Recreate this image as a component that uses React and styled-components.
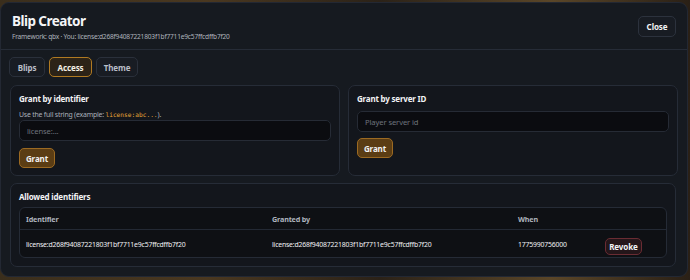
import React from "react";
import styled, { createGlobalStyle } from "styled-components";

const Global = createGlobalStyle`
  html, body { margin: 0; padding: 0; }
  body {
    width: 690px; height: 280px; overflow: hidden;
    background: linear-gradient(90deg, #3a2e1c 0%, #4a3820 30%, #2b2218 55%, #5a4628 80%, #2a2016 100%);
    font-family: "Noto Sans", "Open Sans", sans-serif;
  }
`;

const Stage = styled.div`
  padding-top: 2px;
`;

const Modal = styled.div`
  width: 688px;
  height: 275px;
  box-sizing: border-box;
  background: #161a20;
  border: 1px solid #232833;
  border-radius: 9px;
  overflow: hidden;
  display: flex;
  flex-direction: column;
  color: #e8eaee;
`;

const Header = styled.div`
  height: 47px;
  box-sizing: border-box;
  border-bottom: 1px solid #262c37;
  display: flex;
  align-items: center;
  justify-content: space-between;
  padding: 0 11px 0 11px;
`;

const TitleBlock = styled.div`
  display: flex;
  flex-direction: column;
  gap: 3px;
  margin-top: 1px;
`;

const Title = styled.div`
  font-size: 13.5px;
  font-weight: 700;
  line-height: 16px;
  letter-spacing: -0.55px;
  color: #f4f5f7;
`;

const Sub = styled.div`
  font-size: 6.6px;
  line-height: 9px;
  letter-spacing: -0.2px;
  color: #aeb3bc;
`;

const Btn = styled.button`
  font-family: inherit;
  font-weight: 700;
  font-size: 8px;
  letter-spacing: -0.1px;
  color: #f2f3f5;
  border-radius: 5px;
  box-sizing: border-box;
  cursor: pointer;
  padding: 0;
  background: ${p => p.$bg};
  border: 1px solid ${p => p.$bd};
  width: ${p => p.$w}px;
  height: ${p => p.$h}px;
`;

const Body = styled.div`
  padding: 7px 11px 0 9px;
  display: flex;
  flex-direction: column;
  gap: 7px;
`;

const Tabs = styled.div`
  display: flex;
  gap: 4px;
  margin-left: -1px;
`;

const Tab = styled.button`
  font-family: inherit;
  font-weight: 700;
  font-size: 8px;
  letter-spacing: -0.1px;
  height: 20px;
  width: ${p => p.$w}px;
  box-sizing: border-box;
  border-radius: 5px;
  padding: 0;
  color: ${p => (p.$active ? "#f5f0e6" : "#b9bec7")};
  background: ${p => (p.$active ? "#2c2317" : "#181c23")};
  border: 1px solid ${p => (p.$active ? "#b07a22" : "#2a303b")};
`;

const Row = styled.div`
  display: grid;
  grid-template-columns: 330px 330px;
  gap: 8px;
  margin-top: 1px;
`;

const Card = styled.div`
  background: #13161c;
  border: 1px solid #262c37;
  border-radius: 7px;
  box-sizing: border-box;
  height: ${p => p.$h}px;
  padding: 7px 8px 0 8px;
  display: flex;
  flex-direction: column;
`;

const CardTitle = styled.div`
  font-size: 8px;
  font-weight: 700;
  line-height: 12px;
  letter-spacing: -0.2px;
  color: #f2f3f5;
`;

const Help = styled.div`
  font-size: 6.9px;
  line-height: 10px;
  letter-spacing: -0.2px;
  color: #aab0b9;
  margin-top: 5px;
`;

const Code = styled.code`
  font-family: "DejaVu Sans Mono", "Liberation Mono", monospace;
  font-size: 6.2px;
  letter-spacing: 0;
  color: #e3a436;
`;

const Input = styled.input`
  font-family: inherit;
  font-size: 7.6px;
  letter-spacing: -0.1px;
  box-sizing: border-box;
  width: 100%;
  height: 21px;
  background: #0b0c10;
  border: 1px solid #262b35;
  border-radius: 5px;
  padding: 0 7px;
  color: #e0e0e0;
  margin-top: ${p => p.$mt}px;
  outline: none;
  &::placeholder { color: #6e737c; }
`;

const Actions = styled.div`
  margin-top: ${p => p.$mt}px;
  display: flex;
`;

const Table = styled.div`
  margin-top: 4px;
  background: #0e1014;
  border: 1px solid #252b36;
  border-radius: 6px;
  height: 51px;
  box-sizing: border-box;
`;

const TRow = styled.div`
  display: grid;
  grid-template-columns: 246px 246px 87px 1fr;
  align-items: center;
  height: ${p => p.$h}px;
  padding-left: 6px;
  border-bottom: ${p => (p.$head ? "1px solid #232934" : "none")};
  box-sizing: border-box;
`;

const Th = styled.div`
  font-size: 7.2px;
  font-weight: 700;
  letter-spacing: -0.15px;
  color: #aeb4be;
`;

const Td = styled.div`
  font-size: 6.9px;
  letter-spacing: -0.2px;
  color: #eef0f3;
  white-space: nowrap;
`;

export default function App() {
  const id = "license:d268f94087221803f1bf7711e9c57ffcdffb7f20";
  return (
    <>
      <Global />
      <Stage>
        <Modal>
          <Header>
            <TitleBlock>
              <Title>Blip Creator</Title>
              <Sub>Framework: qbx · You: {id}</Sub>
            </TitleBlock>
            <Btn $bg="#181c23" $bd="#2c323d" $w={38} $h={21}>Close</Btn>
          </Header>
          <Body>
            <Tabs>
              <Tab $w={36}>Blips</Tab>
              <Tab $w={43} $active>Access</Tab>
              <Tab $w={42}>Theme</Tab>
            </Tabs>
            <Row>
              <Card $h={91}>
                <CardTitle>Grant by identifier</CardTitle>
                <Help>
                  Use the full string (example: <Code>license:abc...</Code>).
                </Help>
                <Input placeholder="license:..." $mt={0} />
                <Actions $mt={7}>
                  <Btn $bg="#5b3d14" $bd="#9c6a22" $w={36} $h={20}>Grant</Btn>
                </Actions>
              </Card>
              <Card $h={91}>
                <CardTitle>Grant by server ID</CardTitle>
                <Input placeholder="Player server id" $mt={6} />
                <Actions $mt={6}>
                  <Btn $bg="#5b3d14" $bd="#9c6a22" $w={36} $h={20}>Grant</Btn>
                </Actions>
              </Card>
            </Row>
            <Card $h={84}>
              <CardTitle>Allowed identifiers</CardTitle>
              <Table>
                <TRow $head $h={22}>
                  <Th>Identifier</Th>
                  <Th>Granted by</Th>
                  <Th>When</Th>
                  <div />
                </TRow>
                <TRow $h={28}>
                  <Td>{id}</Td>
                  <Td>{id}</Td>
                  <Td>1775990756000</Td>
                  <div>
                    <Btn $bg="#24161a" $bd="#6a2c33" $w={37} $h={17}>Revoke</Btn>
                  </div>
                </TRow>
              </Table>
            </Card>
          </Body>
        </Modal>
      </Stage>
    </>
  );
}
